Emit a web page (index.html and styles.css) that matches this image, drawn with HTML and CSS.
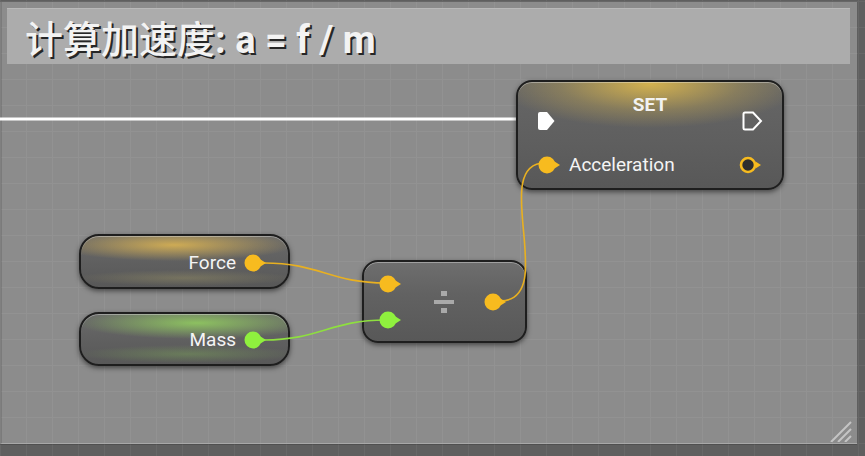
FILE: index.html
```html
<!DOCTYPE html>
<html lang="zh">
<head>
<meta charset="utf-8">
<title>Blueprint</title>
<link rel="stylesheet" href="styles.css">
</head>
<body>
<div class="canvas">
  <div class="comment">
    <div class="comment-header"><span class="cjk">计算加速度</span>: a = f / m</div>
    <svg class="grip" width="22" height="21" viewBox="0 0 22 21">
      <path d="M21 1 L1 21 M21 8 L8 21 M21 15 L15 21" stroke="#c4c4c4" stroke-width="2"/>
    </svg>
  </div>

  <svg class="wires exec" width="865" height="456" viewBox="0 0 865 456">
    <line x1="0" y1="119" x2="540" y2="119" stroke="#ffffff" stroke-width="3"/>
  </svg>

  <div class="node set">
    <div class="set-title">SET</div>
    <div class="exec-row">
      <svg width="19" height="20" viewBox="0 0 19 20"><path d="M3 1 H10 L17.5 10 L10 19 H3 Q1 19 1 17 V3 Q1 1 3 1 Z" fill="#ffffff"/></svg>
      <svg width="21" height="20" viewBox="0 0 21 20"><path d="M3 1.5 H11 L19 10 L11 18.5 H3 Q1.5 18.5 1.5 17 V3 Q1.5 1.5 3 1.5 Z" fill="none" stroke="#ffffff" stroke-width="2"/></svg>
    </div>
    <div class="pin-row">
      <svg class="pin pin-in" width="24" height="18" viewBox="0 0 24 18"><circle cx="9" cy="9" r="8.5" fill="#f7bb1f"/><path d="M16.5 5.5 L22 9 L16.5 12.5 Z" fill="#f7bb1f"/></svg>
      <span class="label">Acceleration</span>
      <svg class="pin pin-out" width="24" height="18" viewBox="0 0 24 18"><circle cx="9" cy="9" r="7" fill="#2e2e2e" stroke="#f7bb1f" stroke-width="2.6"/><path d="M16.5 5.5 L22 9 L16.5 12.5 Z" fill="#f7bb1f"/></svg>
    </div>
  </div>

  <div class="node var force">
    <span class="label">Force</span>
    <svg class="pin" width="24" height="18" viewBox="0 0 24 18"><circle cx="9" cy="9" r="8.5" fill="#f7bb1f"/><path d="M16.5 5.5 L22 9 L16.5 12.5 Z" fill="#f7bb1f"/></svg>
  </div>

  <div class="node var mass">
    <span class="label">Mass</span>
    <svg class="pin" width="24" height="18" viewBox="0 0 24 18"><circle cx="9" cy="9" r="8.5" fill="#8ff03e"/><path d="M16.5 5.5 L22 9 L16.5 12.5 Z" fill="#8ff03e"/></svg>
  </div>

  <div class="node divide">
    <div class="inputs">
      <svg class="pin" width="24" height="18" viewBox="0 0 24 18"><circle cx="9" cy="9" r="8.5" fill="#f7bb1f"/><path d="M16.5 5.5 L22 9 L16.5 12.5 Z" fill="#f7bb1f"/></svg>
      <svg class="pin" width="24" height="18" viewBox="0 0 24 18"><circle cx="9" cy="9" r="8.5" fill="#8ff03e"/><path d="M16.5 5.5 L22 9 L16.5 12.5 Z" fill="#8ff03e"/></svg>
    </div>
    <div class="op">
      <svg width="20" height="22" viewBox="0 0 20 22"><rect x="7" y="0" width="6" height="5" fill="#a9a9a9"/><rect x="0" y="9" width="20" height="4" fill="#a9a9a9"/><rect x="7" y="17" width="6" height="5" fill="#a9a9a9"/></svg>
    </div>
    <svg class="pin" width="24" height="18" viewBox="0 0 24 18"><circle cx="9" cy="9" r="8.5" fill="#f7bb1f"/><path d="M16.5 5.5 L22 9 L16.5 12.5 Z" fill="#f7bb1f"/></svg>
  </div>

  <svg class="wires data" width="865" height="456" viewBox="0 0 865 456">
    <path d="M264 263 C 320 263, 330 283, 386 283" fill="none" stroke="#e8b021" stroke-width="1.6"/>
    <path d="M264 340 C 320 340, 330 320, 386 320" fill="none" stroke="#8edf3f" stroke-width="1.6"/>
    <path d="M500 301 C 560 301, 488 163, 545 163" fill="none" stroke="#e8b021" stroke-width="1.6"/>
  </svg>
</div>
</body>
</html>
```

FILE: styles.css
```css
* { box-sizing: border-box; }

html, body {
  margin: 0;
  padding: 0;
  width: 865px;
  height: 456px;
  overflow: hidden;
}

body {
  font-family: Roboto, "Noto Sans CJK SC", sans-serif;
  color: #f2f2f2;
}

.canvas {
  position: relative;
  width: 865px;
  height: 456px;
  background-color: #5f5f5f;
  background-image:
    linear-gradient(to right, #676767 1px, transparent 1px),
    linear-gradient(to bottom, #676767 1px, transparent 1px);
  background-size: 26px 26px;
  background-position: 0 1px;
  padding: 2px 8px 12px 0;
}

.comment {
  position: relative;
  width: 857px;
  height: 442px;
  background: rgba(255, 255, 255, 0.285);
  border-left: 2px solid rgba(0, 0, 0, 0.12);
  border-bottom: 1px solid rgba(255, 255, 255, 0.2);
  box-shadow: 0 1px 0 rgba(0, 0, 0, 0.15);
  padding: 6px 7px 0 5px;
}

.comment-header {
  height: 56px;
  background: #acacac;
  border-top: 1px solid #b9b9b9;
  padding: 11px 0 0 18px;
  font-size: 38px;
  line-height: 40px;
  font-weight: 700;
  color: #f3f3f3;
  text-shadow: 2px 2px 0 #262626;
  white-space: nowrap;
}

.comment-header .cjk {
  font-weight: 500;
}

.grip {
  position: absolute;
  right: 5px;
  bottom: 1px;
}

.wires {
  position: absolute;
  left: 0;
  top: 0;
  pointer-events: none;
}

.wires.data {
  z-index: 1;
}

.pin {
  position: relative;
  z-index: 2;
}

.node {
  position: absolute;
  border: 2px solid #1e1e1e;
  border-radius: 16px;
  background: linear-gradient(#6a6a6a, #5f5f5f 55%, #585858);
  box-shadow: 0 2px 5px rgba(0, 0, 0, 0.5), inset 0 1px 0 rgba(255, 255, 255, 0.35);
}

.label {
  font-size: 19px;
  line-height: 22px;
  color: #f4f4f4;
  white-space: nowrap;
}

.set {
  left: 516px;
  top: 80px;
  width: 268px;
  height: 110px;
  padding: 12px 19px 0 19px;
  display: flex;
  flex-direction: column;
  background:
    radial-gradient(150px 44px at 50% 2px, rgba(230, 190, 75, 0.85), rgba(200, 170, 80, 0.35) 60%, rgba(200, 170, 80, 0) 100%),
    linear-gradient(#666, #5f5f5f 55%, #585858);
}

.set-title {
  text-align: center;
  font-weight: 700;
  font-size: 19px;
  line-height: 22px;
}

.exec-row {
  display: flex;
  justify-content: space-between;
  align-items: center;
  margin-top: -5px;
}

.pin-row {
  display: flex;
  align-items: center;
  margin-top: 23px;
}

.pin-row .pin-in {
  margin-left: 1px;
  margin-right: 7px;
}

.pin-row .pin-out {
  margin-left: auto;
}

.var {
  left: 79px;
  width: 211px;
  border-radius: 20px;
  display: flex;
  align-items: center;
  justify-content: flex-end;
  gap: 8px;
  padding-right: 20px;
}

.force {
  top: 234px;
  height: 55px;
  padding-top: 3px;
  background:
    radial-gradient(120px 16px at 45% 9px, rgba(232, 188, 80, 0.8), rgba(232, 188, 80, 0)),
    radial-gradient(110px 8px at 50% 42px, rgba(215, 200, 110, 0.22), rgba(215, 200, 110, 0)),
    linear-gradient(#6a6a6a, #5f5f5f 55%, #585858);
}

.mass {
  top: 312px;
  height: 54px;
  padding-top: 2px;
  background:
    radial-gradient(120px 16px at 56% 9px, rgba(150, 215, 95, 0.8), rgba(150, 215, 95, 0)),
    radial-gradient(110px 9px at 52% 40px, rgba(140, 200, 90, 0.3), rgba(140, 200, 90, 0)),
    linear-gradient(#6a6a6a, #5f5f5f 55%, #585858);
}

.divide {
  left: 362px;
  top: 260px;
  width: 165px;
  height: 83px;
  display: flex;
  align-items: center;
  padding: 0 17px 0 15px;
  background: linear-gradient(#6e6e6e, #626262 40%, #585858);
}

.inputs {
  display: flex;
  flex-direction: column;
  gap: 18px;
}

.inputs svg, .divide > svg, .var svg, .exec-row svg, .pin-row svg {
  display: block;
}

.op {
  flex: 1;
  display: flex;
  justify-content: center;
  align-items: center;
}
```
